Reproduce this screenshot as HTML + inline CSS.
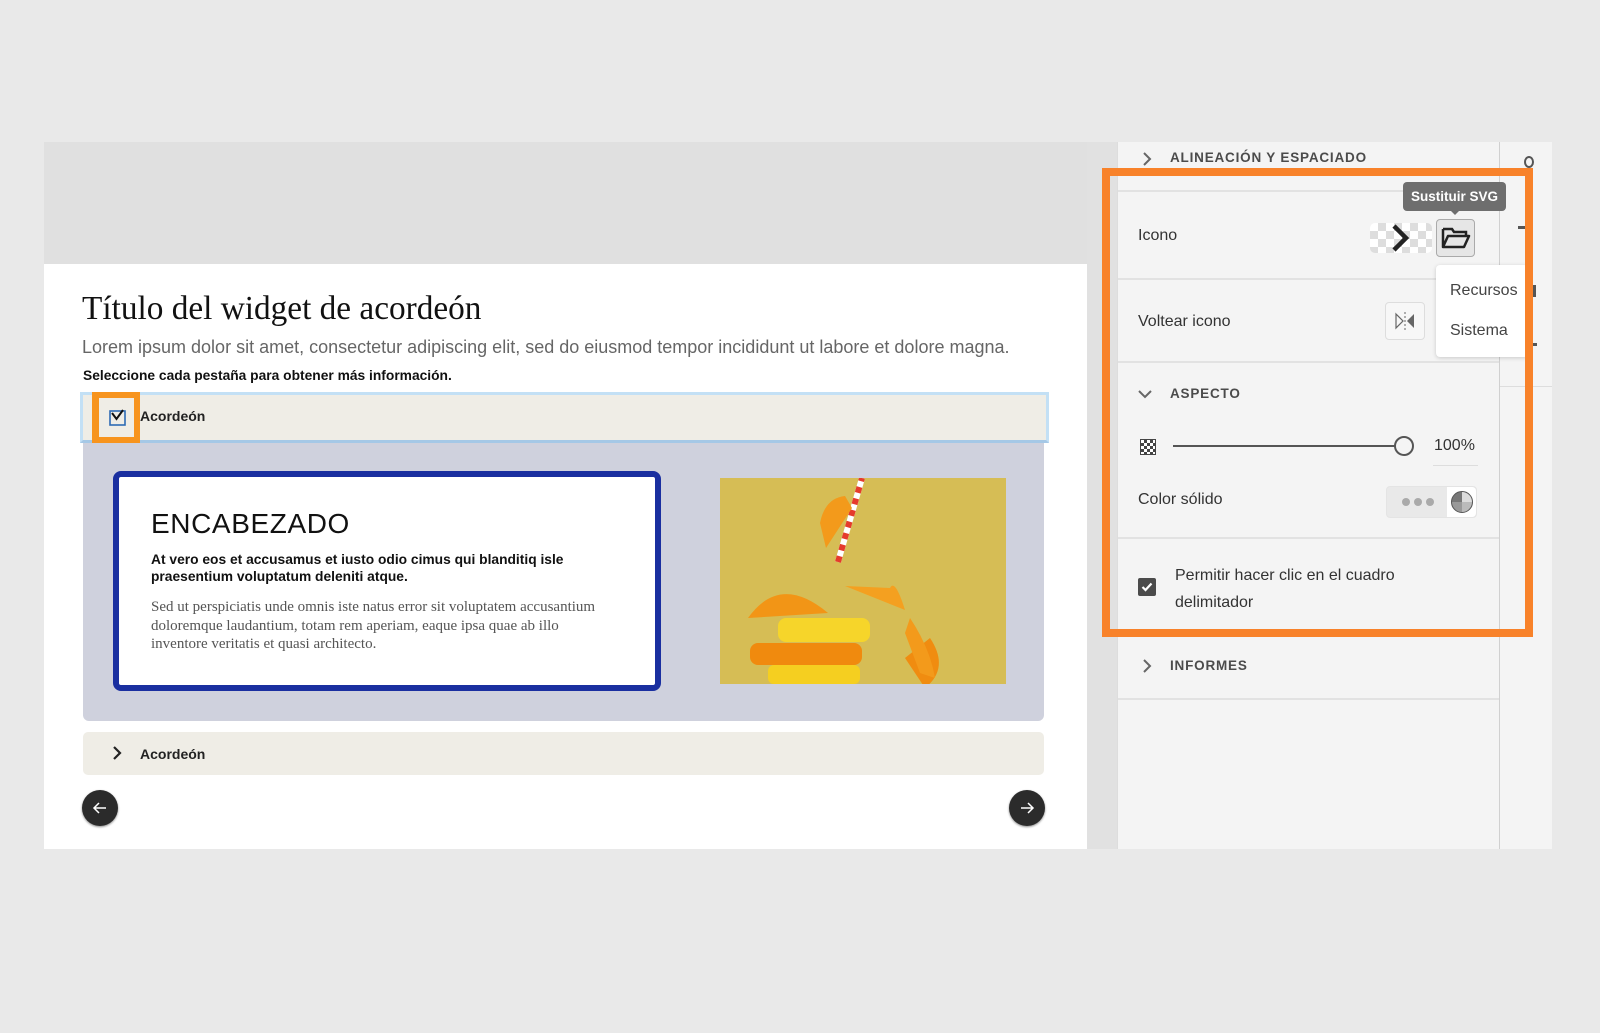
<!DOCTYPE html>
<html><head><meta charset="utf-8"><style>
*{margin:0;padding:0;box-sizing:border-box}
body{width:1600px;height:1033px;background:#e9e9e9;position:relative;overflow:hidden;font-family:"Liberation Sans",sans-serif}
.a{position:absolute}
.t{white-space:nowrap}
</style></head><body>
<!-- canvas -->
<div class="a" style="left:44px;top:142px;width:1043px;height:122px;background:#e0e0e0"></div>
<div class="a" style="left:44px;top:264px;width:1043px;height:585px;background:#fff"></div>
<div class="a" style="left:1087px;top:142px;width:30px;height:707px;background:#e1e1e1"></div>

<div class="a t" style="left:82px;top:290px;font-family:'Liberation Serif',serif;font-size:33.3px;color:#111">Título del widget de acordeón</div>
<div class="a t" style="left:82px;top:337px;font-size:18px;color:#666">Lorem ipsum dolor sit amet, consectetur adipiscing elit, sed do eiusmod tempor incididunt ut labore et dolore magna.</div>
<div class="a t" style="left:83px;top:368px;font-size:13.8px;font-weight:bold;color:#111">Seleccione cada pestaña para obtener más información.</div>

<!-- accordion 1 header -->
<div class="a" style="left:80px;top:392px;width:969px;height:51px;background:#efede6;border:3px solid #c3e0f5;border-bottom-color:#a5c8e6"></div>
<div class="a" style="left:92px;top:392px;width:48px;height:51px;background:#f7941e"></div>
<div class="a" style="left:99px;top:398px;width:35px;height:39px;background:#efede6"></div>
<svg class="a" style="left:109px;top:409px" width="18" height="17" viewBox="0 0 18 17"><rect x="1" y="2" width="15" height="14" fill="none" stroke="#2d6bb5" stroke-width="1.6"/><path d="M3 4 L7.5 10 L14 1" fill="none" stroke="#111" stroke-width="2"/></svg>
<div class="a t" style="left:140px;top:408px;font-size:14px;font-weight:bold;color:#222">Acordeón</div>

<!-- body -->
<div class="a" style="left:83px;top:443px;width:961px;height:278px;background:#cfd1dd;border-radius:0 0 6px 6px"></div>
<div class="a" style="left:113px;top:471px;width:548px;height:220px;background:#fff;border:6px solid #1a2fa0;border-radius:8px"></div>
<div class="a t" style="left:151px;top:508px;font-size:28px;color:#111;letter-spacing:0.6px">ENCABEZADO</div>
<div class="a" style="left:151px;top:551px;width:470px;font-size:13.8px;font-weight:bold;color:#111;line-height:17px">At vero eos et accusamus et iusto odio cimus qui blanditiq isle praesentium voluptatum deleniti atque.</div>
<div class="a" style="left:151px;top:598px;width:462px;font-family:'Liberation Serif',serif;font-size:15px;color:#555;line-height:18.5px">Sed ut perspiciatis unde omnis iste natus error sit voluptatem accusantium doloremque laudantium, totam rem aperiam, eaque ipsa quae ab illo inventore veritatis et quasi architecto.</div>

<!-- image -->
<svg class="a" style="left:720px;top:478px" width="286" height="206" viewBox="0 0 286 206">
<rect width="286" height="206" fill="#d6bd55"/>
<path d="M118 84 L142 0" stroke="#fff" stroke-width="6"/>
<path d="M118 84 L142 0" stroke="#e53b2c" stroke-width="6" stroke-dasharray="6 6"/>
<path d="M125 18 Q105 20 100 45 L106 70 L132 30 Z" fill="#f39a1b"/>
<path d="M185 132 Q175 100 170 110 L125 108 Z" fill="#f4a020"/>
<path d="M210 160 Q230 190 205 210 L185 180 Z" fill="#f08c10"/>
<path d="M190 140 Q210 170 215 200 L200 195 L185 155 Z" fill="#f39a1b"/>
<path d="M28 140 Q60 95 108 135 Z" fill="#f29516"/>
<rect x="58" y="140" width="92" height="24" rx="8" fill="#f6d52a"/>
<rect x="30" y="165" width="112" height="22" rx="8" fill="#f08a0e"/>
<rect x="48" y="187" width="92" height="19" rx="6" fill="#f5cf20"/>
</svg>

<!-- accordion 2 -->
<div class="a" style="left:83px;top:732px;width:961px;height:43px;background:#efede6;border-radius:5px"></div>
<svg class="a" style="left:112px;top:746px" width="10" height="14" viewBox="0 0 10 14"><path d="M2 1 L8 7 L2 13" fill="none" stroke="#222" stroke-width="2.2"/></svg>
<div class="a t" style="left:140px;top:746px;font-size:14px;font-weight:bold;color:#222">Acordeón</div>

<!-- nav buttons -->
<div class="a" style="left:82px;top:790px;width:36px;height:36px;border-radius:50%;background:#2b2b2b;box-shadow:0 1px 2px #888"></div>
<svg class="a" style="left:91px;top:799px" width="18" height="18" viewBox="0 0 18 18"><path d="M15 9 H3 M8 4 L3 9 L8 14" fill="none" stroke="#fff" stroke-width="1.5"/></svg>
<div class="a" style="left:1009px;top:790px;width:36px;height:36px;border-radius:50%;background:#2b2b2b;box-shadow:0 1px 2px #888"></div>
<svg class="a" style="left:1018px;top:799px" width="18" height="18" viewBox="0 0 18 18"><path d="M3 9 H15 M10 4 L15 9 L10 14" fill="none" stroke="#fff" stroke-width="1.5"/></svg>

<!-- right panel -->
<div class="a" style="left:1117px;top:142px;width:382px;height:707px;background:#f4f4f4;border-left:1px solid #ddd"></div>
<div class="a" style="left:1499px;top:142px;width:53px;height:707px;background:#f4f4f4;border-left:1px solid #d0d0d0"></div>
<div class="a" style="left:1500px;top:386px;width:52px;height:1px;background:#ddd"></div>

<svg class="a" style="left:1142px;top:152px" width="10" height="14" viewBox="0 0 10 14"><path d="M2 1 L8 7 L2 13" fill="none" stroke="#666" stroke-width="2"/></svg>
<div class="a t" style="left:1170px;top:150px;font-size:13.5px;font-weight:bold;color:#4b4b4b;letter-spacing:0.8px">ALINEACIÓN Y ESPACIADO</div>
<div class="a" style="left:1118px;top:190px;width:381px;height:2px;background:#e2e2e2"></div>

<div class="a t" style="left:1138px;top:227px;font-size:16px;color:#333">Icono</div>
<div class="a" style="left:1370px;top:223px;width:62px;height:30px;border-radius:5px;background-color:#fff;background-image:linear-gradient(45deg,#ddd 25%,transparent 25%,transparent 75%,#ddd 75%),linear-gradient(45deg,#ddd 25%,transparent 25%,transparent 75%,#ddd 75%);background-size:16px 16px;background-position:0 0,8px 8px"></div>
<svg class="a" style="left:1390px;top:224px" width="22" height="28" viewBox="0 0 22 28"><path d="M4 2 L16 14 L4 26" fill="none" stroke="#222" stroke-width="4.5"/></svg>
<div class="a" style="left:1436px;top:219px;width:39px;height:38px;border:1px solid #aaa;border-radius:4px;background:#e6e6e6"></div>
<svg class="a" style="left:1441px;top:226px" width="30" height="24" viewBox="0 0 30 24"><path d="M2 3 H11 L13 6 H25 V10" fill="none" stroke="#222" stroke-width="2.5"/><path d="M2 3 V21 H23 L28 10 H7 L2 21" fill="none" stroke="#222" stroke-width="2.5" stroke-linejoin="round"/></svg>
<div class="a t" style="left:1403px;top:182px;width:103px;height:29px;background:#6e6e6e;border-radius:4px;color:#fff;font-size:13.5px;font-weight:bold;text-align:center;line-height:29px">Sustituir SVG</div>
<div class="a" style="left:1450px;top:210px;width:0;height:0;border-left:5px solid transparent;border-right:5px solid transparent;border-top:5px solid #6e6e6e"></div>

<div class="a" style="left:1118px;top:278px;width:381px;height:2px;background:#e2e2e2"></div>
<div class="a t" style="left:1138px;top:313px;font-size:16px;color:#333">Voltear icono</div>
<div class="a" style="left:1385px;top:302px;width:40px;height:38px;border:1px solid #ddd;border-radius:4px;background:#f7f7f7"></div>
<svg class="a" style="left:1394px;top:311px" width="22" height="20" viewBox="0 0 22 20"><path d="M2 3 L9 10 L2 17 Z" fill="none" stroke="#666" stroke-width="1.2"/><path d="M20 3 L13 10 L20 17 Z" fill="#666"/><path d="M11 1 V19" stroke="#666" stroke-width="1" stroke-dasharray="2 2"/></svg>

<!-- dropdown -->
<div class="a" style="left:1436px;top:265px;width:92px;height:92px;background:#fff;border-radius:4px;box-shadow:0 1px 4px rgba(0,0,0,.18)"></div>
<div class="a t" style="left:1450px;top:282px;font-size:16px;color:#444">Recursos</div>
<div class="a t" style="left:1450px;top:322px;font-size:16px;color:#444">Sistema</div>

<div class="a" style="left:1118px;top:361px;width:381px;height:2px;background:#e2e2e2"></div>
<svg class="a" style="left:1138px;top:389px" width="14" height="10" viewBox="0 0 14 10"><path d="M1 2 L7 8 L13 2" fill="none" stroke="#666" stroke-width="2"/></svg>
<div class="a t" style="left:1170px;top:386px;font-size:13.5px;font-weight:bold;color:#4b4b4b;letter-spacing:0.8px">ASPECTO</div>

<div class="a" style="left:1140px;top:439px;width:16px;height:16px;background-color:#fff;border:1px solid #444;background-image:linear-gradient(45deg,#444 25%,transparent 25%,transparent 75%,#444 75%),linear-gradient(45deg,#444 25%,transparent 25%,transparent 75%,#444 75%);background-size:6px 6px;background-position:0 0,3px 3px"></div>
<div class="a" style="left:1173px;top:445px;width:222px;height:2px;background:#555"></div>
<div class="a" style="left:1394px;top:436px;width:20px;height:20px;border-radius:50%;border:2px solid #555;background:#f4f4f4"></div>
<div class="a t" style="left:1434px;top:437px;font-size:16px;color:#333">100%</div>
<div class="a" style="left:1433px;top:465px;width:45px;height:1px;background:#ddd"></div>

<div class="a t" style="left:1138px;top:491px;font-size:16px;color:#333">Color sólido</div>
<div class="a" style="left:1386px;top:486px;width:91px;height:32px;border:1px solid #e4e4e4;border-radius:4px;background:#e9e9e9"></div>
<div class="a" style="left:1447px;top:487px;width:29px;height:30px;background:#fff;border-radius:0 4px 4px 0"></div>
<div class="a" style="left:1402px;top:498px;width:8px;height:8px;border-radius:50%;background:#aaa"></div>
<div class="a" style="left:1414px;top:498px;width:8px;height:8px;border-radius:50%;background:#aaa"></div>
<div class="a" style="left:1426px;top:498px;width:8px;height:8px;border-radius:50%;background:#aaa"></div>
<div class="a" style="left:1451px;top:491px;width:22px;height:22px;border-radius:50%;border:1.5px solid #555;background:conic-gradient(#ddd 0 25%,#bbb 25% 50%,#999 50% 75%,#777 75%)"></div>

<div class="a" style="left:1118px;top:537px;width:381px;height:2px;background:#e2e2e2"></div>
<div class="a" style="left:1138px;top:578px;width:18px;height:18px;border-radius:2px;background:#4b4b4b"></div>
<svg class="a" style="left:1140px;top:580px" width="14" height="14" viewBox="0 0 14 14"><path d="M2.5 7 L5.5 10 L11.5 3.5" fill="none" stroke="#fff" stroke-width="2.2"/></svg>
<div class="a" style="left:1175px;top:562px;font-size:16px;color:#333;line-height:27px">Permitir hacer clic en el cuadro<br>delimitador</div>

<svg class="a" style="left:1142px;top:659px" width="10" height="14" viewBox="0 0 10 14"><path d="M2 1 L8 7 L2 13" fill="none" stroke="#666" stroke-width="2"/></svg>
<div class="a t" style="left:1170px;top:658px;font-size:13.5px;font-weight:bold;color:#4b4b4b;letter-spacing:0.8px">INFORMES</div>
<div class="a" style="left:1118px;top:698px;width:381px;height:2px;background:#e2e2e2"></div>

<!-- icon column glimpses -->
<div class="a" style="left:1524px;top:156px;width:10px;height:12px;border:2px solid #555;border-radius:50%"></div>
<div class="a" style="left:1518px;top:226px;width:14px;height:3px;background:#555"></div>
<div class="a" style="left:1533px;top:285px;width:3px;height:12px;background:#555"></div>
<div class="a" style="left:1533px;top:343px;width:4px;height:3px;background:#555"></div>

<!-- orange highlight -->
<div class="a" style="left:1102px;top:168px;width:431px;height:469px;border:8px solid #f8822a"></div>
</body></html>
